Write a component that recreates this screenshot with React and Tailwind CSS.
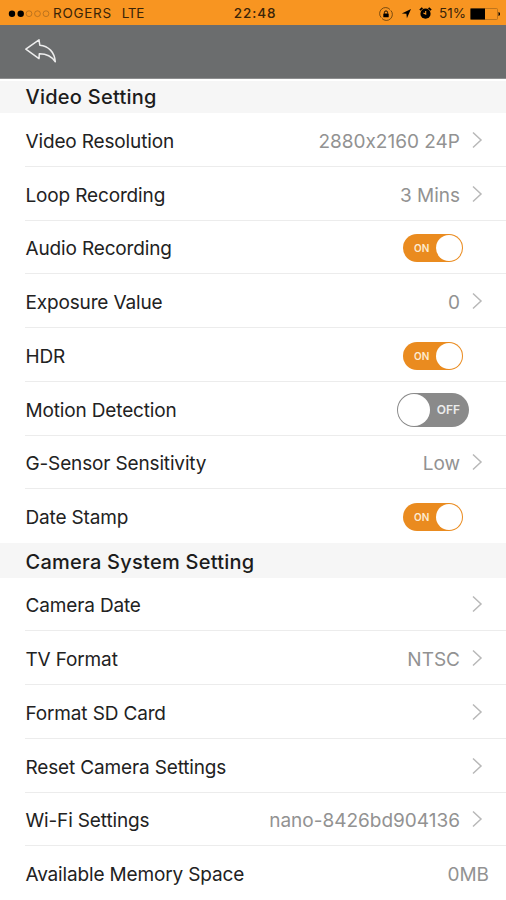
import React, { useState } from 'react';

const videoSettings = [
  { label: 'Video Resolution', value: '2880x2160 24P' },
  { label: 'Loop Recording', value: '3 Mins' },
  { label: 'Audio Recording', toggle: true },
  { label: 'Exposure Value', value: '0' },
  { label: 'HDR', toggle: true },
  { label: 'Motion Detection', toggle: false },
  { label: 'G-Sensor Sensitivity', value: 'Low' },
  { label: 'Date Stamp', toggle: true },
];

const cameraSettings = [
  { label: 'Camera Date' },
  { label: 'TV Format', value: 'NTSC' },
  { label: 'Format SD Card' },
  { label: 'Reset Camera Settings' },
  { label: 'Wi-Fi Settings', value: 'nano-8426bd904136' },
  { label: 'Available Memory Space', value: '0MB', readOnly: true },
];

function StatusBar() {
  return (
    <div className="h-[25px] shrink-0 bg-[#f89521] flex items-center text-[13.5px] text-[#3a2408] leading-none">
      <div className="flex-1 flex items-center pl-2 pt-0.5">
        <svg width="42" height="8" viewBox="0 0 42 8" fill="none">
          <circle cx="4" cy="3.7" r="3.2" fill="#000" />
          <circle cx="12.7" cy="3.7" r="3.2" fill="#000" />
          <circle cx="21" cy="3.7" r="2.9" stroke="#a5661c" strokeWidth="0.7" />
          <circle cx="29.5" cy="3.7" r="2.9" stroke="#a5661c" strokeWidth="0.7" />
          <circle cx="38" cy="3.7" r="2.9" stroke="#a5661c" strokeWidth="0.7" />
        </svg>
        <span className="ml-[3px] tracking-[0.7px]">ROGERS</span>
        <span className="ml-[10px] tracking-[-0.3px]">LTE</span>
      </div>
      <div className="pt-0.5 pl-px font-medium tracking-[0.9px]">22:48</div>
      <div className="flex-1 flex items-center justify-end pr-[5px] pt-0.5">
        {/* rotation lock */}
        <svg width="14" height="14" viewBox="0 0 14 14" fill="none">
          <path d="M2.2 10.6A5.8 5.8 0 0 1 11 2.5M11.8 3.4A5.8 5.8 0 0 1 3 11.5" stroke="#6b430f" strokeWidth="0.9" />
          <path d="M5.4 6.6V5.5a1.6 1.6 0 0 1 3.2 0v1.1" stroke="#000" strokeWidth="0.9" />
          <rect x="4.3" y="6.4" width="5.4" height="3.8" rx="0.5" fill="#000" />
        </svg>
        {/* location */}
        <svg className="ml-2" width="11" height="11" viewBox="0 0 11 11">
          <path d="M10 1L5.9 10.2L5.4 5.8L0.8 5.4Z" fill="#000" />
        </svg>
        {/* alarm */}
        <svg className="ml-[7px]" width="13" height="13" viewBox="0 0 13 13" fill="none">
          <circle cx="6.5" cy="6.7" r="5.1" fill="#000" />
          <path d="M0.9 3.2L3.4 0.9M12.1 3.2L9.6 0.9" stroke="#000" strokeWidth="1.8" />
          <path d="M6.7 4V7.1L4.4 5.9" stroke="#f89521" strokeWidth="1.1" />
        </svg>
        <span className="ml-[7px]">51%</span>
        <svg className="ml-[4px]" width="31" height="12" viewBox="0 0 31 12" fill="none">
          <rect x="0.5" y="0.5" width="27" height="11" rx="1" stroke="#b06d1d" strokeWidth="0.8" />
          <rect x="0.5" y="0.5" width="14.5" height="11" fill="#000" />
          <path d="M28.5 4v4c1-.3 1.5-1 1.5-2S29.5 4.3 28.5 4Z" fill="#000" />
        </svg>
      </div>
    </div>
  );
}

function Toggle({ on, onClick }) {
  if (on) {
    return (
      <button onClick={onClick} className="mt-[3px] mr-[43px] w-[60px] h-[28px] rounded-full bg-[#ea8b1f] flex items-center justify-between pl-[11px] pr-px">
        <span className="text-[10px] font-semibold text-[#fdebd2] leading-none">ON</span>
        <span className="w-[26px] h-[26px] rounded-full bg-white" />
      </button>
    );
  }
  return (
    <button onClick={onClick} className="mt-[3px] mr-[37px] w-[72px] h-[34px] rounded-full bg-[#8a8a8a] flex items-center justify-between pl-px pr-[9px]">
      <span className="w-[32px] h-[32px] rounded-full bg-white" />
      <span className="text-[12px] font-semibold text-[#ececec] leading-none">OFF</span>
    </button>
  );
}

function Row({ item }) {
  const [on, setOn] = useState(item.toggle);
  const isToggle = item.toggle !== undefined;

  return (
    <div className="group h-[53.75px] shrink-0 pl-[25px] bg-white">
      <div className="h-full flex items-center justify-between border-b border-[#ececec] group-last:border-white">
        <span className="pl-[0.5px] text-[19px] text-[#222] tracking-[-0.15px] pt-[5.5px] whitespace-nowrap">{item.label}</span>
        {isToggle && <Toggle on={on} onClick={() => setOn(!on)} />}
        {!isToggle && (
          <div className={`flex items-center ${item.readOnly ? 'pr-[17px]' : 'pr-[23px]'}`}>
            <span className="text-[19px] text-[#929292] pt-[5.5px] whitespace-nowrap">{item.value}</span>
            {!item.readOnly && (
              <svg className="ml-[12px] mt-px" width="11" height="18" viewBox="0 0 11 18" fill="none">
                <path d="M1 1.5L9 9L1 16.5" stroke="#b8b8b8" strokeWidth="1.5" />
              </svg>
            )}
          </div>
        )}
      </div>
    </div>
  );
}

function Section({ title, items, className = '' }) {
  return (
    <section className="shrink-0 flex flex-col">
      <h2 className={`h-[34.5px] shrink-0 bg-[#f6f6f6] pl-[25.5px] flex items-center text-[20px] font-medium text-[#1c1c1c] tracking-[0.25px] ${className}`}>
        {title}
      </h2>
      {items.map((item) => <Row key={item.label} item={item} />)}
    </section>
  );
}

export default function App() {
  return (
    <div className="w-full h-[900px] overflow-hidden flex flex-col bg-white font-['Inter',sans-serif] [font-feature-settings:'calt'_0]">
      <StatusBar />
      <div className="h-[53.5px] shrink-0 bg-[#6b6d6e] border-b border-[#8d8e8f] flex items-center pl-[24px]">
        <svg width="34" height="26" viewBox="0 0 34 26" fill="none">
          <path d="M1.8 11.2L15 1.8L15.8 7.2C24.5 8 30.5 14 31.3 23.8C27.5 18.2 23 15.7 15.3 15.8L15 20.6Z" stroke="#ededed" strokeWidth="1.5" strokeLinejoin="round" />
        </svg>
      </div>
      <Section title="Video Setting" items={videoSettings} className="border-t-2 border-white pt-px" />
      <Section title="Camera System Setting" items={cameraSettings} className="pt-[3px]" />
    </div>
  );
}
